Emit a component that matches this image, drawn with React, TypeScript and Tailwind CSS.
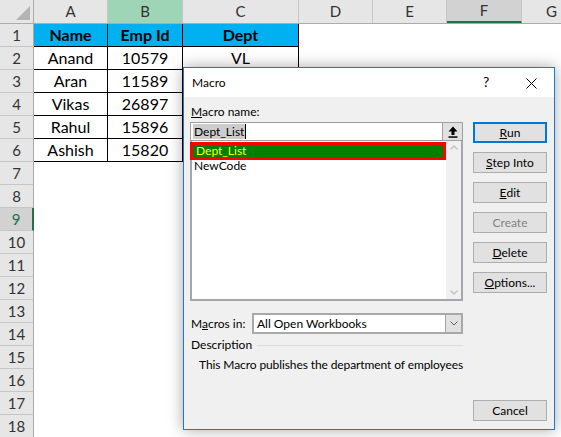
import React from "react";

const cols = [
  { l: "A", w: "w-[74px]", bg: "bg-[#e6e6e6]" },
  { l: "B", w: "w-[75px]", bg: "bg-[#9fd5b7]" },
  { l: "C", w: "w-[116px]", bg: "bg-[#e6e6e6]" },
  { l: "D", w: "w-[74px]", bg: "bg-[#e6e6e6]" },
  { l: "E", w: "w-[74px]", bg: "bg-[#e6e6e6]" },
  { l: "F", w: "w-[75px]", bg: "bg-[#d2d2d2]" },
  { l: "G", w: "w-[60px]", bg: "bg-[#e6e6e6]" },
];

const data = [
  ["Anand", "10579", "VL"],
  ["Aran", "11589", ""],
  ["Vikas", "26897", ""],
  ["Rahul", "15896", ""],
  ["Ashish", "15820", ""],
];

function Btn({ children, primary, disabled }: { children: React.ReactNode; primary?: boolean; disabled?: boolean }) {
  return (
    <div
      className={
        "h-[21px] w-[74px] flex items-center justify-center bg-[#e1e1e1] text-[12px] " +
        (primary ? "border-2 border-[#0078d7] " : "border border-[#adadad] ") +
        (disabled ? "text-[#838383]" : "text-black")
      }
    >
      {children}
    </div>
  );
}

export default function App() {
  const cellFont = { fontFamily: "Lato, 'Noto Sans', sans-serif" } as React.CSSProperties;
  return (
    <div className="relative w-[561px] h-[437px] overflow-hidden bg-white" style={cellFont}>
      {/* column header */}
      <div className="flex h-[24px] border-b border-[#ababab]">
        <div className="w-[34px] shrink-0 bg-[#e6e6e6] border-r border-[#ababab] relative flex items-end justify-end p-[3px]">
          <svg width="14" height="14" viewBox="0 0 14 14">
            <polygon points="14,0 14,14 0,14" fill="#b4b4b4" />
          </svg>
        </div>
        {cols.map((c) => (
          <div
            key={c.l}
            className={
              c.w +
              " shrink-0 flex items-center justify-center text-[15px] text-[#333] border-r border-[#c6c6c6] " +
              c.bg +
              (c.l === "F" ? " border-b-2 border-b-[#217346]" : "")
            }
          >
            {c.l}
          </div>
        ))}
      </div>
      {/* rows */}
      {Array.from({ length: 18 }).map((_, i) => {
        const r = i + 1;
        const sel = r === 9;
        return (
          <div key={r} className="flex h-[23px]">
            <div
              className={
                "w-[34px] shrink-0 flex items-center justify-center text-[15px] border-b border-[#c6c6c6] " +
                (sel
                  ? "bg-[#d2d2d2] border-r-2 border-r-[#217346] text-[#217346]"
                  : "bg-[#e6e6e6] border-r border-r-[#ababab] text-[#333]")
              }
            >
              {r}
            </div>
            {r === 1 && (
              <>
                <div className="w-[74px] shrink-0 bg-[#00b0f0] border-r border-b border-black flex items-center justify-center font-bold text-[16px] text-black">Name</div>
                <div className="w-[75px] shrink-0 bg-[#00b0f0] border-r border-b border-black flex items-center justify-center font-bold text-[16px] text-black">Emp Id</div>
                <div className="w-[116px] shrink-0 bg-[#00b0f0] border-r border-b border-black flex items-center justify-center font-bold text-[16px] text-black">Dept</div>
              </>
            )}
            {r >= 2 && r <= 6 && (
              <>
                <div className="w-[74px] shrink-0 border-r border-b border-black flex items-center justify-center text-[16px] text-black">{data[r - 2][0]}</div>
                <div className="w-[75px] shrink-0 border-r border-b border-black flex items-center justify-center text-[16px] text-black">{data[r - 2][1]}</div>
                <div className="w-[116px] shrink-0 border-r border-b border-black flex items-center justify-center text-[16px] text-black">{data[r - 2][2]}</div>
              </>
            )}
          </div>
        );
      })}

      {/* Macro dialog */}
      <div
        className="absolute left-[183px] top-[67px] w-[372px] h-[363px] border border-[#1979ca] bg-[#f0f0f0] shadow-[0_0_14px_rgba(0,0,0,0.35)] flex flex-col"
        style={{ fontFamily: "Lato, 'Noto Sans', sans-serif" }}
      >
        <div className="h-[29px] bg-white flex items-center pl-[8px] text-[12px] text-black relative">
          <span>Macro</span>
          <span className="absolute left-[299px] top-[6px] text-[14px] leading-[16px]">?</span>
          <svg className="absolute left-[342px] top-[10px]" width="11" height="11" viewBox="0 0 11 11">
            <path d="M0.5 0.5 L10.5 10.5 M10.5 0.5 L0.5 10.5" stroke="#000" strokeWidth="1" />
          </svg>
        </div>
        <div className="flex-1 flex pl-[6px] gap-[10px] text-[12px] text-black">
          {/* left column */}
          <div className="w-[273px] flex flex-col pt-[7px]">
            <div className="h-[16px] leading-[16px] pl-[1px]">
              <span className="underline">M</span>acro name:
            </div>
            <div className="mt-[2px] h-[19px] flex border border-[#a0a0a0] bg-white">
              <div className="flex-1 flex items-center pl-[2px]">
                <span className="bg-[#cccccc] leading-[15px] px-[1px]">Dept_List</span>
                <span className="w-[1px] h-[15px] bg-black" />
              </div>
              <div className="w-[20px] bg-[#e1e1e1] border-l border-[#a0a0a0] flex items-center justify-center">
                <svg width="10" height="12" viewBox="0 0 10 12">
                  <path d="M5 0.5 L9.5 5.5 L6.5 5.5 L6.5 9 L3.5 9 L3.5 5.5 L0.5 5.5 Z" fill="#000" />
                  <rect x="0.5" y="10.3" width="9" height="1.5" fill="#000" />
                </svg>
              </div>
            </div>
            <div className="h-[160px] flex border-2 border-t-0 border-[#a5a5b0] bg-white">
              <div className="flex-1 flex flex-col pt-[1px]">
                <div className="h-[18px] -ml-[2px] border-[3px] border-[#ff0000] bg-[#008000] text-[#ffff00] flex items-center pl-[3px] leading-[12px]">
                  Dept_List
                </div>
                <div className="-mt-[1px] h-[13px] leading-[13px] pl-[2px]">NewCode</div>
              </div>
              <div className="w-[15px] bg-[#f0f0f0] flex flex-col justify-between items-center py-[4px]">
                <svg width="8" height="5" viewBox="0 0 8 5">
                  <path d="M0.5 4.5 L4 1 L7.5 4.5" stroke="#c0c0c0" strokeWidth="1.3" fill="none" />
                </svg>
                <svg width="8" height="5" viewBox="0 0 8 5">
                  <path d="M0.5 0.5 L4 4 L7.5 0.5" stroke="#c0c0c0" strokeWidth="1.3" fill="none" />
                </svg>
              </div>
            </div>
            <div className="mt-[12px] h-[21px] flex items-center">
              <div className="w-[62px] pl-[1px]">
                M<span className="underline">a</span>cros in:
              </div>
              <div className="flex-1 h-[21px] flex border-2 border-[#a8a8a8] bg-white">
                <div className="flex-1 flex items-center pl-[3px]">All Open Workbooks</div>
                <div className="w-[16px] bg-[#e1e1e1] flex items-center justify-center border-l border-[#a8a8a8]">
                  <svg width="8" height="5" viewBox="0 0 8 5">
                    <path d="M0.5 0.5 L4 4 L7.5 0.5" stroke="#606060" strokeWidth="1" fill="none" />
                  </svg>
                </div>
              </div>
            </div>
            <div className="mt-[3px] h-[16px] flex items-center">
              <span className="pl-[1px]">Description</span>
              <div className="flex-1 ml-[5px] h-[1px] bg-[#dcdcdc]" />
            </div>
            <div className="mt-[4px] h-[16px] leading-[16px] pl-[9px] whitespace-nowrap tracking-[-0.1px]">
              This Macro publishes the department of employees
            </div>
          </div>
          {/* right column */}
          <div className="w-[74px] flex flex-col pt-[25px] pb-[8px]">
            <div className="flex flex-col gap-[9px]">
              <Btn primary>
                <span className="underline">R</span>un
              </Btn>
              <Btn>
                <span className="underline">S</span>tep Into
              </Btn>
              <Btn>
                <span className="underline">E</span>dit
              </Btn>
              <Btn disabled>Create</Btn>
              <Btn>
                <span className="underline">D</span>elete
              </Btn>
              <Btn>
                <span className="underline">O</span>ptions...
              </Btn>
            </div>
            <div className="mt-auto">
              <Btn>Cancel</Btn>
            </div>
          </div>
        </div>
      </div>
    </div>
  );
}
